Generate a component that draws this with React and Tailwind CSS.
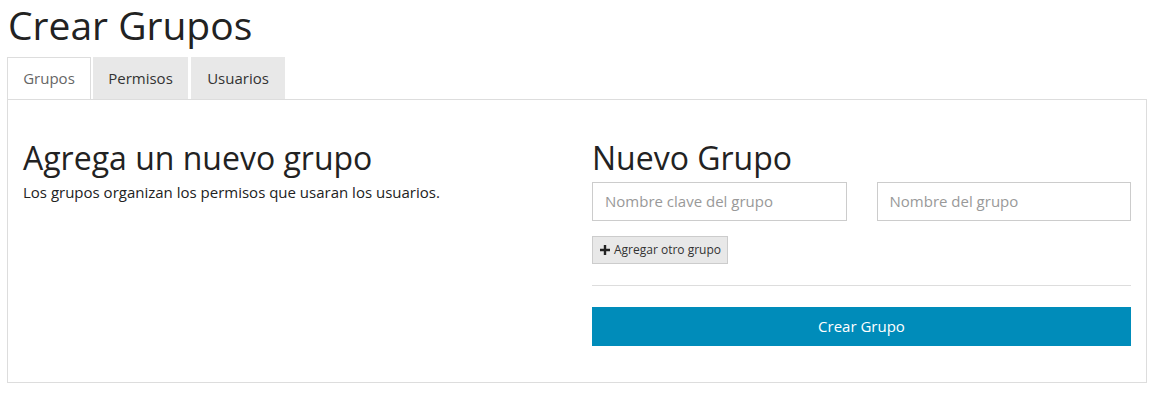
export default function App() {
  return (
    <div className="min-h-[413px] bg-white text-[#222]" style={{ fontFamily: '"Open Sans", sans-serif' }}>
      <div className="ml-[7px] w-[1140px]">
        <h1 className="pt-[3px] pl-[1px] text-[39px] leading-[44px] font-normal text-[#222] mb-[10px]">Crear Grupos</h1>
        <div className="flex items-end gap-[2px] h-[42px]">
          <div className="h-[42px] w-[84px] border border-b-0 border-[#ddd] bg-white text-[#666] text-[15px] flex items-center justify-center">Grupos</div>
          <div className="h-[42px] w-[95px] bg-[#e8e8e8] text-[#333] text-[15px] flex items-center justify-center">Permisos</div>
          <div className="h-[42px] w-[94px] ml-[1px] bg-[#e8e8e8] text-[#333] text-[15px] flex items-center justify-center">Usuarios</div>
        </div>
        <div className="border border-[#ddd] h-[284px] grid grid-cols-2">
          <div className="px-[15px] pt-[38px]">
            <h2 className="text-[32px] leading-[40px] font-normal text-[#222]">Agrega un nuevo grupo</h2>
            <p className="text-[15px] leading-[22px] text-[#222] mt-[3px]">Los grupos organizan los permisos que usaran los usuarios.</p>
          </div>
          <div className="px-[15px] pt-[38px]">
            <h2 className="text-[32px] leading-[40px] font-normal text-[#222]">Nuevo Grupo</h2>
            <div className="grid grid-cols-2 gap-[30px] mt-[4px]">
              <input className="h-[39px] border border-[#ccc] px-[12px] pb-[1px] text-[15px] text-[#333] placeholder:text-[#999] outline-none" placeholder="Nombre clave del grupo" />
              <input className="h-[39px] border border-[#ccc] px-[12px] pb-[1px] text-[15px] text-[#333] placeholder:text-[#999] outline-none" placeholder="Nombre del grupo" />
            </div>
            <div className="mt-[15px]">
              <button className="h-[28px] w-[136px] pl-[7px] bg-[#e8e8e8] border border-[#ccc] text-[12px] text-[#333] flex items-center gap-[4px]">
                <svg width="10" height="10" viewBox="0 0 10 10"><path d="M3.8 0h2.4v3.8H10v2.4H6.2V10H3.8V6.2H0V3.8h3.8z" fill="#222" /></svg>
                Agregar otro grupo
              </button>
            </div>
            <div className="h-px bg-[#ddd] mt-[21px]" />
            <button className="mt-[21px] w-full h-[39px] bg-[#008cba] text-white text-[15px]">Crear Grupo</button>
          </div>
        </div>
      </div>
    </div>
  );
}
